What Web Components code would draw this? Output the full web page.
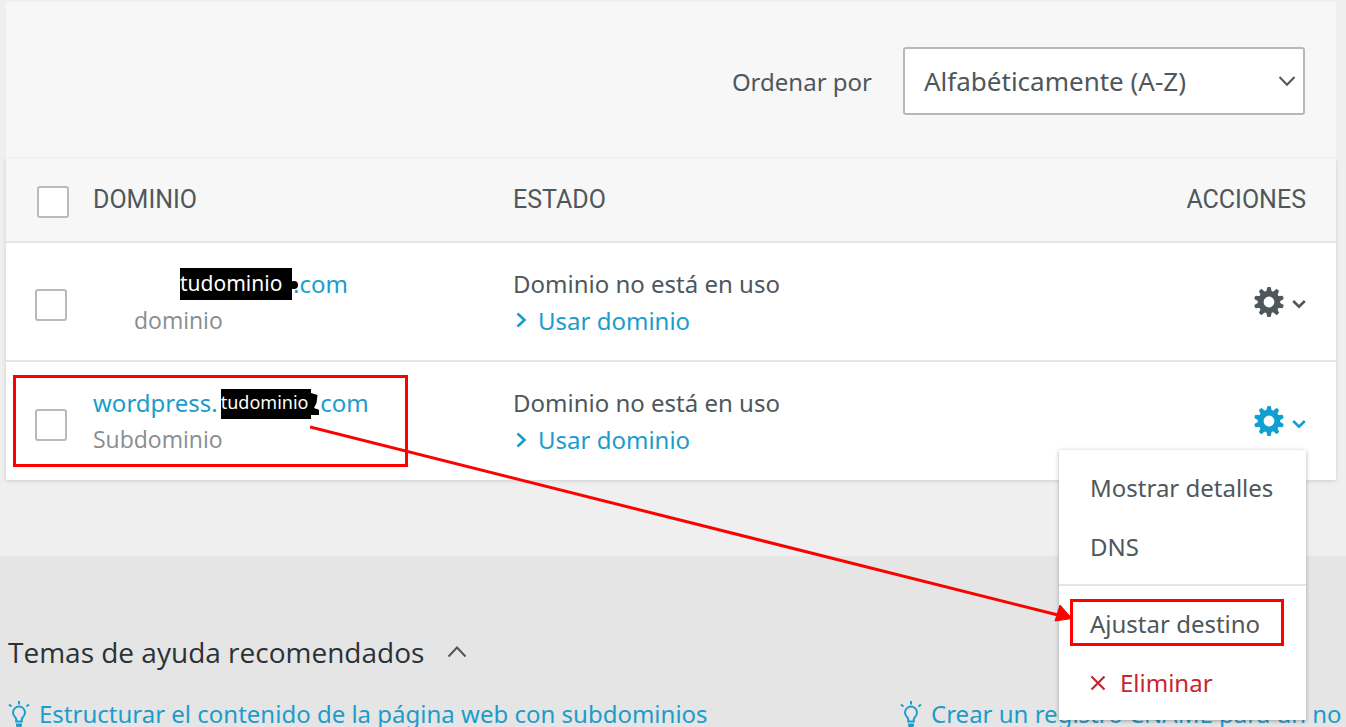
<!DOCTYPE html>
<html lang="es">
<head>
<meta charset="utf-8">
<meta name="viewport" content="width=device-width, initial-scale=1">
<title>Dominios</title>
<style>
  html { overflow-x: hidden; }
  body {
    margin: 0;
    min-height: 100vh;
    display: flex;
    flex-direction: column;
    background: #efefef;
    color: #4e575b;
    font: 24px/37px "Noto Sans", "Open Sans", sans-serif;
    --link: #1b9dcb;
    --line: #e4e5e5;
    --mark: #ff0000;
  }
</style>
</head>
<body>
<domain-page></domain-page>

<script>
const define = (name, html, setup) => {
  const template = document.createElement('template');
  template.innerHTML = html;
  customElements.define(name, class extends HTMLElement {
    constructor() {
      super();
      this.attachShadow({ mode: 'open' }).append(template.content.cloneNode(true));
    }
    connectedCallback() { if (setup) setup(this, this.shadowRoot); }
  });
};

const teeth = Array.from({ length: 10 }, (_, i) =>
  `<path d="M13.2 6 14.2 1.6Q14.4 1 15 1h2q.6 0 .8.6L18.8 6z" transform="rotate(${i * 36} 16 16)"/>`).join('');

const ICONS = {
  gear: [32, 32, `<g fill="currentColor">${teeth}<path fill-rule="evenodd" d="M16 4.8a11.2 11.2 0 1 0 0 22.4 11.2 11.2 0 0 0 0-22.4zm0 5.8a5.4 5.4 0 1 1 0 10.8 5.4 5.4 0 0 1 0-10.8z"/></g>`],
  down: [14, 10, '<path d="M1.2 2 7 7.6 12.8 2" fill="none" stroke="currentColor" stroke-width="2.6"/>'],
  right: [12, 16, '<path d="M2.5 1.5 9.5 8 2.5 14.5" fill="none" stroke="currentColor" stroke-width="2.6"/>'],
  select: [18, 12, '<path d="M1.5 2 9 9.8 16.5 2" fill="none" stroke="currentColor" stroke-width="2"/>'],
  up: [20, 14, '<path d="M1.5 11.5 10 2.5l8.500 9" fill="none" stroke="currentColor" stroke-width="2"/>'],
  cross: [16, 16, '<path d="M1.5 1.500l13 13M14.500 1.500l-13 13" fill="none" stroke="currentColor" stroke-width="2.2"/>'],
  bulb: [22, 27, '<g fill="none" stroke="currentColor" stroke-width="2"><path d="M8.200 20.500v-2.500c0-1.200-3.200-2.800-3.200-6.400a6 6 0 0 1 12 0c0 3.600-3.200 5.200-3.200 6.400v2.500z"/><path d="M11 0v3.500M1 3.500l2.500 2M21 3.500l-2.500 2"/></g><path d="M8 22.500h6v1.500q0 2.500-3 2.500t-3-2.500z" fill="currentColor"/>']
};

define('ui-icon', `<style>:host{display:block;flex:none} svg{display:block}</style>`, (host, root) => {
  if (root.querySelector('svg')) return;
  const [w, h, body] = ICONS[host.getAttribute('name')];
  root.innerHTML += `<svg width="${w}" height="${h}" viewBox="0 0 ${w} ${h}" aria-hidden="true">${body}</svg>`;
});

define('tick-box', `
<style>
  :host { display: block; line-height: 0; }
  input {
    appearance: none; box-sizing: border-box; width: 32px; height: 32px; margin: 0;
    border: 2px solid #b7bbbc; border-radius: 3px; background: #fff;
  }
  input:checked { background: var(--link); }
</style>
<input type="checkbox">`, (host, root) => {
  root.querySelector('input').setAttribute('aria-label', host.getAttribute('label'));
});

define('sort-bar', `
<style>
  :host { display: flex; justify-content: flex-end; align-items: center; gap: 31px; padding: 45px 31px 44px 30px; }
  .field { position: relative; width: 402px; }
  select {
    appearance: none; box-sizing: border-box; display: block; width: 100%; height: 68px; padding: 0 50px 0 19px;
    font: 26px/37px "Noto Sans", "Open Sans", sans-serif; color: inherit;
    background: #fff; border: 2px solid #b4b9b9; border-radius: 3px;
  }
  ui-icon { position: absolute; right: 9px; top: 28px; pointer-events: none; }
</style>
<label for="order">Ordenar por</label>
<div class="field">
  <select id="order"><option>Alfabéticamente (A-Z)</option><option>Alfabéticamente (Z-A)</option></select>
  <ui-icon name="select"></ui-icon>
</div>`);

define('domain-name', `
<style>
  :host { display: block; }
  a { display: flex; align-items: flex-end; height: 37px; color: var(--link); text-decoration: none; }
  .kind { color: #888d8f; font-family: "Open Sans", sans-serif; font-size: 23px; }
</style>
<a href="#"><slot></slot></a>
<div class="kind"><slot name="kind"></slot></div>`);

define('black-label', `
<style>
  :host { display: block; position: relative; box-sizing: border-box; margin: 0 1px 2px 0; background: #000; color: #fff; white-space: nowrap; width: 112px; height: 32px; font-size: 21px; line-height: 31px; }
  :host([small]) { margin: 0 3px 2px; width: 90px; height: 30px; font-size: 18px; line-height: 27px; }
  svg { position: absolute; left: 100%; top: 0; width: 9px; height: 30px; }
  .blot, :host([small]) .dot { display: none; }
  :host([small]) .blot { display: block; }
</style>
<slot></slot>
<svg class="dot" viewBox="0 0 9 30"><circle cx="2" cy="17" r="4"/></svg>
<svg class="blot" viewBox="0 0 9 30"><path d="M0 4 6.500 6 5.500 14 3 19 8 21v5H0z"/></svg>`);

define('use-domain', `
<style>
  :host { display: block; }
  a { display: flex; align-items: center; gap: 11px; padding-left: 2px; color: var(--link); text-decoration: none; }
</style>
<div>Dominio no está en uso</div>
<a href="#"><ui-icon name="right"></ui-icon>Usar dominio</a>`);

define('action-button', `
<style>
  :host { display: flex; justify-content: flex-end; position: relative; }
  button { display: flex; align-items: center; gap: 7px; padding: 0; border: 0; background: none; color: #4e575b; }
  button[aria-expanded=true] { color: #0f9fd0; }
  ui-icon[name=down] { padding-top: 5px; }
  ::slotted(*) { position: absolute; z-index: 1; right: 0; top: 45px; }
</style>
<button type="button" aria-label="Acciones"><ui-icon name="gear"></ui-icon><ui-icon name="down"></ui-icon></button>
<slot></slot>`, (host, root) => {
  root.querySelector('button').setAttribute('aria-expanded', host.hasAttribute('open'));
});

define('action-menu', `
<style>
  :host { display: block; width: 247px; background: #fff; box-shadow: 0 1px 4px rgba(0,0,0,.3); text-align: left; }
  .group { padding: 8px 0; }
  .group + .group { border-top: 2px solid var(--line); }
  a { display: flex; align-items: center; gap: 14px; height: 59px; padding-left: 31px; color: inherit; text-decoration: none; position: relative; white-space: nowrap; }
  .danger { color: #c9252d; }
  .marked::after { content: ""; position: absolute; box-sizing: border-box; left: 11px; right: 22px; top: 5px; height: 47px; border: 3px solid var(--mark); }
</style>
<nav aria-label="Acciones del dominio">
  <div class="group"><a href="#">Mostrar detalles</a><a href="#">DNS</a></div>
  <div class="group"><a class="marked" href="#">Ajustar destino</a><a class="danger" href="#"><ui-icon name="cross"></ui-icon>Eliminar</a></div>
</nav>`);

define('domain-table', `
<style>
  :host { display: block; background: #fff; box-shadow: 0 1px 4px rgba(0,0,0,.14); }
  table { width: 100%; table-layout: fixed; border-collapse: separate; border-spacing: 0; }
  .pick { width: 87px; } .domain { width: 420px; } .actions { width: 200px; }
  th, td { box-sizing: border-box; padding: 0; text-align: left; border-bottom: 2px solid var(--line); }
  th { height: 84px; padding-bottom: 2px; background: #f7f7f7; font: 25px/37px Roboto, sans-serif; }
  td { position: relative; height: 119px; }
  tr:last-child td { height: 118px; border-bottom: 0; }
  th:first-child { padding: 3px 0 0 31px; }
  td:first-child { padding: 7px 0 0 29px; }
  th:last-child, td:last-child { text-align: right; padding-right: 30px; }
  .erased { padding-left: 41px; }
  .offset { margin-left: 87px; }
  .frame { position: absolute; box-sizing: border-box; left: 7px; top: 13px; width: 395px; height: 92px; border: 3px solid var(--mark); pointer-events: none; }
</style>
<table>
  <colgroup><col class="pick"><col class="domain"><col><col class="actions"></colgroup>
  <thead>
    <tr><th scope="col"><tick-box label="Seleccionar todo"></tick-box></th><th scope="col">DOMINIO</th><th scope="col">ESTADO</th><th scope="col">ACCIONES</th></tr>
  </thead>
  <tbody>
    <tr>
      <td><tick-box label="Seleccionar dominio"></tick-box></td>
      <td><domain-name><black-label class="offset">tudominio</black-label>.com<span slot="kind" class="erased">dominio</span></domain-name></td>
      <td><use-domain></use-domain></td>
      <td><action-button></action-button></td>
    </tr>
    <tr>
      <td><tick-box label="Seleccionar subdominio"></tick-box><div class="frame"></div></td>
      <td><domain-name>wordpress.<black-label small>tudominio</black-label>.com<span slot="kind">Subdominio</span></domain-name></td>
      <td><use-domain></use-domain></td>
      <td><action-button open><action-menu></action-menu></action-button></td>
    </tr>
  </tbody>
</table>`);

define('mark-arrow', `
<style>
  :host { display: block; pointer-events: none; }
  svg { display: block; width: 100%; height: 100%; }
</style>
<svg viewBox="0 0 762 200" preserveAspectRatio="none" aria-hidden="true">
  <path d="M0 3 748 191" stroke="#f00" stroke-width="3" fill="none"/>
  <path d="M762 194.500 750 181 745 197z" fill="#f00" stroke="#f00" stroke-width="1"/>
</svg>`);

define('help-topics', `
<style>
  :host { display: block; flex: 1; padding: 77px 0 0 8px; background: #e5e5e5; overflow: hidden; }
  h2 { display: flex; align-items: center; gap: 23px; margin: 0 0 30px; font-family: "Open Sans", sans-serif; font-size: 28px; line-height: 38px; font-weight: 400; color: #2a3236; }
  ui-icon[name=up] { color: #4e575b; }
  button { display: flex; border: 0; padding: 0; background: none; }
  ul { display: grid; grid-template-columns: 2fr 1fr; margin: 0; padding: 0; list-style: none; }
  li { min-width: 0; }
  a { display: flex; align-items: center; height: 26px; gap: 9px; line-height: 26px; white-space: nowrap; color: var(--link); text-decoration: none; }
</style>
<h2>Temas de ayuda recomendados <button type="button" aria-label="Contraer"><ui-icon name="up"></ui-icon></button></h2>
<ul>
  <li><a href="#"><ui-icon name="bulb"></ui-icon>Estructurar el contenido de la página web con subdominios</a></li>
  <li><a href="#"><ui-icon name="bulb"></ui-icon>Crear un registro CNAME para un no</a></li>
</ul>`);

define('domain-page', `
<style>
  :host { display: flex; flex-direction: column; flex: 1; }
  main { position: relative; z-index: 1; margin: 2px 10px 76px 6px; }
  sort-bar { background: #f7f7f7; }
  mark-arrow { position: absolute; z-index: 2; left: 304px; right: 264px; top: 422px; height: 200px; }
</style>
<main>
  <sort-bar></sort-bar>
  <domain-table></domain-table>
  <mark-arrow></mark-arrow>
</main>
<help-topics></help-topics>`);
</script>
</body>
</html>
